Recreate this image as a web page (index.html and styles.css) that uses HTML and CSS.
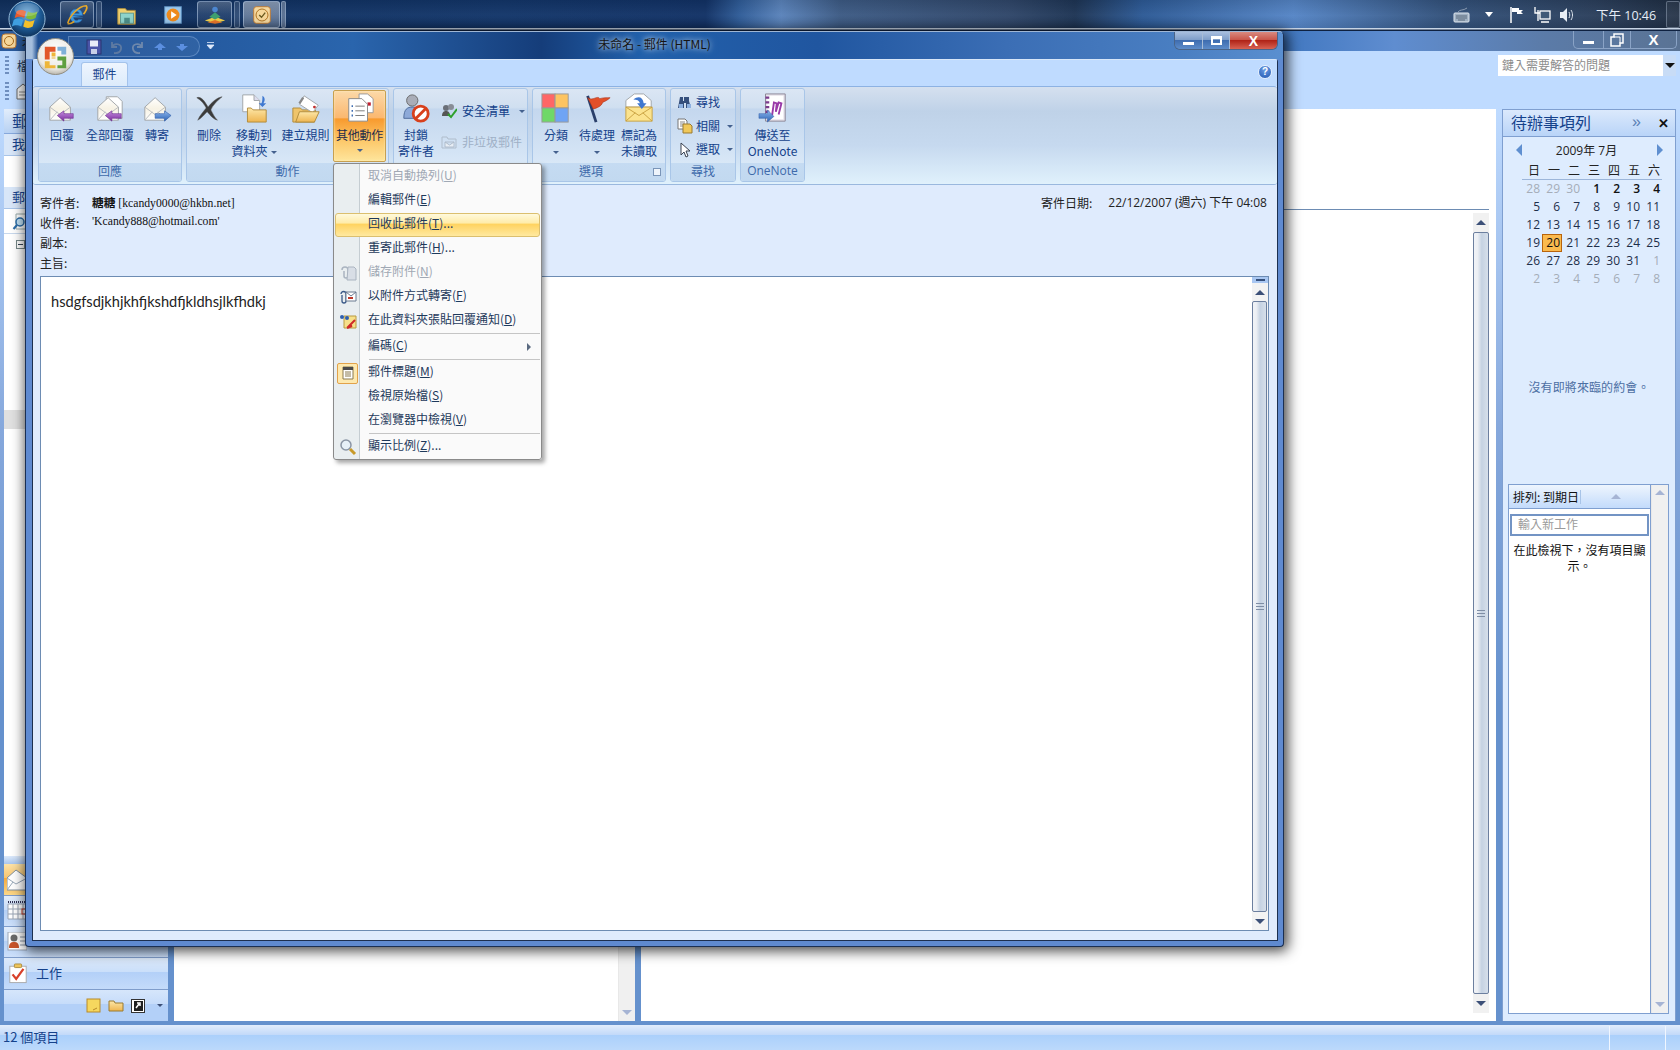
FILE: index.html
```html
<!DOCTYPE html>
<html lang="zh-Hant">
<head>
<meta charset="utf-8">
<title>未命名 - 郵件 (HTML)</title>
<link rel="stylesheet" href="styles.css">
</head>
<body>
<svg class="defs" aria-hidden="true">
  <defs>
    <linearGradient id="gEnv" x1="0" y1="0" x2="0" y2="1"><stop offset="0" stop-color="#fff"/><stop offset=".5" stop-color="#f7f2e4"/><stop offset="1" stop-color="#fff"/></linearGradient>
    <linearGradient id="gFold" x1="0" y1="0" x2="0" y2="1"><stop offset="0" stop-color="#fde7a8"/><stop offset="1" stop-color="#eeb550"/></linearGradient>
    <linearGradient id="gPurple" x1="0" y1="0" x2="0" y2="1"><stop offset="0" stop-color="#c58ce0"/><stop offset="1" stop-color="#7a2f9e"/></linearGradient>
    <linearGradient id="gBlue" x1="0" y1="0" x2="0" y2="1"><stop offset="0" stop-color="#8fb8ee"/><stop offset="1" stop-color="#2d63b5"/></linearGradient>
    <radialGradient id="gOrb" cx=".5" cy=".38" r=".65"><stop offset="0" stop-color="#6fb0e0"/><stop offset=".55" stop-color="#1f5e9a"/><stop offset="1" stop-color="#0c2c52"/></radialGradient>
    <radialGradient id="gOff" cx=".5" cy=".35" r=".7"><stop offset="0" stop-color="#fff"/><stop offset=".7" stop-color="#eceae4"/><stop offset="1" stop-color="#a9a69c"/></radialGradient>
    <symbol id="env" viewBox="0 0 32 32"><path d="M3 15 14 5l11 10v14H3z" fill="url(#gEnv)" stroke="#a0a4a8"/><path d="M3 15l11 8 11-8M3 29l8-9M25 29l-8-9" fill="none" stroke="#b9bcbf"/></symbol>
  </defs>
</svg>

<div class="desktop">
  <header class="taskbar">
    <div class="tb-start"></div>
    <div class="tb-item tb-box">
      <svg width="24" height="24" viewBox="0 0 26 26"><path d="M6 13.500h13c0-4-2.500-7-6.500-7S5.500 9.500 5.500 14s3 7.500 7 7.500c3 0 5-1.500 6-3.500h-4c-.5.800-1.200 1-2 1-2 0-3.200-1.500-3.300-3.500h10.300M9 11.500c.2-1.500 1.500-2.500 3.300-2.500s3 1 3.200 2.500z" fill="#3f9ae0" stroke="#2a6db8" stroke-width=".5" fill-rule="evenodd"/><path d="M3 22C5 14 15 3 23 3c2 2-1 7-3 9M3 22c1 1 4 0 7-2" fill="none" stroke="#e9a92a" stroke-width="1.800"/></svg>
    </div>
    <div class="tb-stub"></div>
    <div class="tb-item tb-plain tb-explorer">
      <svg width="24" height="24" viewBox="0 0 26 26"><path d="M3 6h8l2 2h9v15H3z" fill="#f0d070" stroke="#a88a3c"/><rect x="6" y="11" width="14" height="11" fill="#8fd4cc" stroke="#5e9a94"/><rect x="10" y="16" width="6" height="6" fill="#4d8f8a"/></svg>
    </div>
    <div class="tb-item tb-plain tb-media">
      <svg width="24" height="24" viewBox="0 0 26 26"><rect x="4" y="4" width="18" height="18" fill="#9cc8ec" stroke="#5c90c0"/><circle cx="13" cy="13" r="7" fill="#ee8a1c"/><path d="M11 9l6 4-6 4z" fill="#fff"/></svg>
    </div>
    <div class="tb-item tb-box tb-second">
      <svg width="24" height="24" viewBox="0 0 26 26"><path d="M2 19l11-4 11 4-11 3z" fill="#f1d04a"/><path d="M7 15l6-5 6 5-6 3z" fill="#3fa070"/><circle cx="13" cy="7" r="3" fill="#4c86d0"/><path d="M5 21l8-2.500 8 2.500-8 1.500z" fill="#e8762a"/></svg>
    </div>
    <div class="tb-stub"></div>
    <div class="tb-item tb-box tb-active">
      <svg width="24" height="24" viewBox="0 0 26 26"><rect x="4" y="4" width="18" height="18" rx="3" fill="#f4d8a0" stroke="#c07a30"/><circle cx="13" cy="13" r="6.500" fill="#f6d79a" stroke="#a86a1a"/><path d="M10 13l2.500 2.500 4-5" fill="none" stroke="#6a5a20" stroke-width="1.500"/></svg>
    </div>
    <div class="tb-stub tb-stub-active"></div>
    <div class="tray">
      <svg width="18" height="18" viewBox="0 0 18 18"><rect x="1" y="7" width="15" height="9" rx="1" fill="#9fb0c2" stroke="#dfe6ee"/><path d="M3 10h11M3 12h11M5 14h7" stroke="#5a6a7c"/><path d="M5 6c2-3 5-1 9-4" fill="none" stroke="#8a9bb0"/></svg>
      <span class="tray-arrow"></span>
      <svg class="tray-flag" width="18" height="18" viewBox="0 0 18 18"><path d="M3 1v16" stroke="#fff" stroke-width="1.500"/><path d="M4 2h7v2h4l-2 2 2 2H9V6H4z" fill="#fff"/></svg>
      <svg class="tray-net" width="18" height="18" viewBox="0 0 18 18"><path d="M1 1v6h5M4 4v11" stroke="#fff" stroke-width="1.300" fill="none"/><rect x="6" y="5" width="10" height="8" fill="#415a78" stroke="#fff" stroke-width="1.300"/><path d="M7 16h8" stroke="#fff" stroke-width="1.500"/></svg>
      <svg class="tray-vol" width="18" height="18" viewBox="0 0 18 18"><path d="M2 6h3l4-4v14l-4-4H2z" fill="#e8eef5"/><path d="M11 6c1 2 1 4 0 6M13 4c2 3 2 7 0 10" fill="none" stroke="#dfe6ee"/></svg>
      <span class="clock">下午 10:46</span>
      <span class="show-desktop"></span>
    </div>
  </header>

  <section class="main-win">
    <div class="main-title">
      <svg class="main-appicon" width="16" height="16" viewBox="0 0 16 16"><rect x="1" y="1" width="14" height="14" rx="3" fill="#f4d8a0" stroke="#c07a30"/><circle cx="8" cy="8" r="4.500" fill="#f6d79a" stroke="#a86a1a"/></svg>
      <span class="main-title-text">未</span>
      <div class="main-controls">
        <span class="mc mc-min"><i></i></span>
        <span class="mc mc-max"><svg width="14" height="14" viewBox="0 0 14 14"><path d="M4 1h9v9h-3v3H1V4h3z" fill="none" stroke="#fff" stroke-width="1.500"/><path d="M4 4h6v6" fill="none" stroke="#fff"/></svg></span>
        <span class="mc mc-close">X</span>
      </div>
    </div>
    <div class="main-menu">
      <div class="menu-bars">
        <div class="menu-line"><span class="dots"></span><span class="menu-word">檔</span></div>
        <div class="menu-line"><span class="dots"></span>
          <svg width="16" height="17" viewBox="0 0 16 17"><path d="M2 6l6-5 6 5v10H2z" fill="#f2f2f2" stroke="#666"/><path d="M4 9h8M4 12h8" stroke="#888"/></svg>
        </div>
      </div>
      <div class="askbox"><span>鍵入需要解答的問題</span><b><i class="tri-d dark"></i></b></div>
    </div>
    <div class="panes">
      <nav class="nav">
        <div class="nav-top">
          <div class="nav-head">郵</div>
          <div class="nav-row">我</div>
          <div class="nav-blank"></div>
          <div class="nav-row">郵</div>
          <div class="nav-search">
            <svg width="18" height="18" viewBox="0 0 18 18"><path d="M4 1h13v15H4z" fill="#fff" stroke="#9aa"/><circle cx="8" cy="9" r="4" fill="#bfe0f5" stroke="#2b6ca8" stroke-width="1.500"/><path d="M5 12l-3.500 4" stroke="#2b6ca8" stroke-width="2"/></svg>
          </div>
          <div class="nav-tree"><span class="tree-box"><i></i></span></div>
          <div class="nav-sel"></div>
        </div>
        <div class="nav-bottom">
          <div class="nav-grip"></div>
          <div class="nb-big nb-on"><svg width="20" height="22" viewBox="0 0 20 22"><path d="M0 9 9 1l11 8v12H0z" fill="#fff" stroke="#7f8f9f"/><path d="M0 9l9 6 11-6M0 21l6-8" fill="none" stroke="#99a8b8"/></svg></div>
          <div class="nb-big"><svg width="20" height="20" viewBox="0 0 20 20"><path d="M1 1h19" stroke="#335" stroke-dasharray="1 1" stroke-width="2"/><path d="M1 3h19v15H1z" fill="#fff" stroke="#9aa5b5"/><path d="M1 8h19M1 13h19M6 3v15M11 3v15M16 3v15" stroke="#9aa5b5"/><rect x="15" y="8" width="5" height="5" fill="none" stroke="#c43c28"/></svg></div>
          <div class="nb-big"><svg width="20" height="20" viewBox="0 0 20 20"><rect x="1" y="0" width="19" height="18" fill="#fff" stroke="#9aa5b5"/><circle cx="7" cy="6" r="3.500" fill="#6a6a6a"/><path d="M2 16c0-5 2-6 5-6s5 1 5 6z" fill="#c8552a"/><path d="M13 5h7M13 9h7M13 13h7" stroke="#8a96a6"/></svg></div>
          <div class="nb-task">
            <svg width="20" height="21" viewBox="0 0 22 22"><rect x="2" y="3" width="18" height="18" fill="#fff" stroke="#a8a8a8"/><rect x="7" y="0.500" width="8" height="4" rx="1" fill="#eec45a" stroke="#a88a3c"/><path d="M5 12l4 5L17 6" fill="none" stroke="#d8402a" stroke-width="2.500"/></svg>
            <span>工作</span>
          </div>
          <div class="nb-icons">
            <svg width="15" height="15" viewBox="0 0 15 15"><rect x="1" y="1" width="13" height="13" fill="#f6d75e" stroke="#b88a2a"/><path d="M7 12l4-2" stroke="#b88a2a"/></svg>
            <svg width="16" height="13" viewBox="0 0 16 13"><path d="M1 2h5l1 2h8v8H1z" fill="url(#gFold)" stroke="#9a7a30"/></svg>
            <svg width="14" height="14" viewBox="0 0 14 14"><rect x=".5" y=".5" width="13" height="13" fill="#fff" stroke="#333"/><rect x="3" y="2" width="9" height="10" fill="#202020"/><path d="M5 9l3-4M6 4h3v3" stroke="#fff" fill="none" stroke-width="1.500"/></svg>
            <i class="tri-d small"></i>
          </div>
        </div>
      </nav>
      <div class="list">
        <div class="list-body"></div>
        <div class="sb-plain"><i class="tri-u pale"></i><i class="tri-d pale"></i></div>
      </div>
      <div class="reading">
        <div class="reading-head"></div>
        <div class="reading-body">
          <div class="reading-fill"></div>
          <div class="sb">
            <span class="sb-btn"><i class="tri-u"></i></span>
            <div class="sb-thumb"><span class="grip"></span></div>
            <span class="sb-btn"><i class="tri-d"></i></span>
          </div>
        </div>
      </div>
      <aside class="todo">
        <div class="todo-head"><span class="todo-title">待辦事項列</span><span class="todo-more">»</span><span class="todo-x">✕</span></div>
        <div class="cal">
          <div class="cal-month"><i class="arr-l"></i><span>2009年 7月</span><i class="arr-r"></i></div>
          <div class="cal-week"><span>日</span><span>一</span><span>二</span><span>三</span><span>四</span><span>五</span><span>六</span></div>
          <div class="cal-grid">
            <span class="off">28</span><span class="off">29</span><span class="off">30</span><span class="on">1</span><span class="on">2</span><span class="on">3</span><span class="on">4</span>
            <span>5</span><span>6</span><span>7</span><span>8</span><span>9</span><span>10</span><span>11</span>
            <span>12</span><span>13</span><span>14</span><span>15</span><span>16</span><span>17</span><span>18</span>
            <span>19</span><span class="today">20</span><span>21</span><span>22</span><span>23</span><span>24</span><span>25</span>
            <span>26</span><span>27</span><span>28</span><span>29</span><span>30</span><span>31</span><span class="off">1</span>
            <span class="off">2</span><span class="off">3</span><span class="off">4</span><span class="off">5</span><span class="off">6</span><span class="off">7</span><span class="off">8</span>
          </div>
        </div>
        <p class="no-appt">沒有即將來臨的約會。</p>
        <div class="tasks">
          <div class="tasks-main">
            <div class="tasks-head"><span class="tasks-sort">排列: 到期日</span><span class="tasks-arrow"><i class="tri-u pale"></i></span></div>
            <div class="task-input">輸入新工作</div>
            <p class="task-empty">在此檢視下，沒有項目顯示。</p>
          </div>
          <div class="sb-plain"><i class="tri-u pale"></i><i class="tri-d pale"></i></div>
        </div>
      </aside>
    </div>
    <footer class="status"><span>12 個項目</span><i class="st-div st-a"></i><i class="st-div st-b"></i></footer>
  </section>

  <section class="mail-win">
    <div class="mail-title">
      <div class="qat">
        <svg width="16" height="16" viewBox="0 0 16 16"><rect x="1" y="1" width="14" height="14" fill="#4a55a8" stroke="#2b3470"/><rect x="4" y="1.500" width="8" height="6" fill="#e8ecf8"/><rect x="5" y="10" width="6" height="5" fill="#c8d0e8"/></svg>
        <svg width="16" height="16" viewBox="0 0 16 16"><path d="M4 3v5h5M4 8c3-5 10-3 9 2s-5 4-7 4" fill="none" stroke="#7f8ea5" stroke-width="1.800" opacity=".6"/></svg>
        <svg width="16" height="16" viewBox="0 0 16 16"><path d="M12 3v5H7M12 8C9 3 2 5 3 10s5 4 7 4" fill="none" stroke="#8a9ab0" stroke-width="1.800" opacity=".7"/></svg>
        <svg width="16" height="16" viewBox="0 0 16 16"><path d="M8 4l6 5H10v2H6V9H2z" fill="#5b8fe0"/></svg>
        <svg width="16" height="16" viewBox="0 0 16 16"><path d="M8 12l6-5H10V5H6v2H2z" fill="#5b8fe0"/></svg>
      </div>
      <svg class="qat-more" width="9" height="9" viewBox="0 0 9 9"><path d="M1 1.500h7M1 4l3.500 4L8 4z" fill="#dfeafa" stroke="#dfeafa" stroke-width=".8"/></svg>
      <h1 class="mail-title-text">未命名 - 郵件 (HTML)</h1>
      <div class="mail-controls">
        <span class="wc wc-min"><i></i></span>
        <span class="wc wc-max"><i></i></span>
        <span class="wc wc-close">X</span>
      </div>
    </div>
    <div class="mail-frame">
      <div class="tabs">
        <span class="tab">郵件</span>
        <span class="help">?</span>
      </div>
      <div class="ribbon">
        <div class="grp g-reply">
          <div class="grp-body">
            <button class="rb w-44"><svg class="ic" viewBox="0 0 32 32"><use href="#env"/><path d="M11 24l7-5v3h10v5H18v3z" fill="url(#gPurple)" stroke="#6a2a8c" stroke-width=".6"/></svg><span>回覆</span></button>
            <button class="rb w-52"><svg class="ic" viewBox="0 0 32 32"><path d="M12 4h12l5 5v18H12z" fill="#fff" stroke="#a0a4a8"/><use href="#env"/><path d="M11 24l7-5v3h10v5H18v3z" fill="url(#gPurple)" stroke="#6a2a8c" stroke-width=".6"/></svg><span>全部回覆</span></button>
            <button class="rb w-42"><svg class="ic" viewBox="0 0 32 32"><use href="#env"/><path d="M31 24l-7-5v3H14v5h10v3z" fill="url(#gBlue)" stroke="#2a5aa8" stroke-width=".6"/></svg><span>轉寄</span></button>
          </div>
          <div class="grp-label">回應</div>
        </div>
        <div class="grp g-actions">
          <div class="grp-body">
            <button class="rb w-38"><svg class="ic" viewBox="0 0 32 32"><path d="M3 5c5-2 9 5 12 10 4-5 9-10 15-11-5 4-10 9-12 14 2 4 4 8 7 11-5-1-8-6-11-9-3 3-6 7-10 9 2-5 6-9 9-13C11 12 8 8 3 5z" fill="#3b3b3b" stroke="#555" stroke-width=".5"/></svg><span>刪除</span></button>
            <button class="rb w-52"><svg class="ic" viewBox="0 0 32 32"><path d="M4 2h12l6 6v12H4z" fill="#fff" stroke="#a0a4a8"/><path d="M16 2v6h6" fill="#dde" stroke="#a0a4a8"/><path d="M9 16h4l2 2h14v13H9z" fill="url(#gFold)" stroke="#b08a3a"/><path d="M25 3c3 2 3 5 1 8h3l-4 4-4-4h3c1-2 1-5 1-8z" fill="#3f78d0"/></svg><span>移動到<br>資料夾<i class="caret"></i></span></button>
            <button class="rb w-51"><svg class="ic" viewBox="0 0 32 32"><path d="M2 16h8l2 2h14l-1 13H2z" fill="#efc46a" stroke="#b08a3a"/><path d="M14 3 29 13 23 21 9 12z" fill="#fff" stroke="#a0a4a8"/><path d="M13 5 9 11" stroke="#888" stroke-width="2.500"/><circle cx="25" cy="15" r="1.500" fill="#c03030"/><path d="M5 31 9 20h21l-5 11z" fill="url(#gFold)" stroke="#b08a3a"/></svg><span>建立規則</span></button>
            <button class="rb rb-hot"><svg class="ic" viewBox="0 0 32 32"><path d="M15 1h9l6 5v15H15z" fill="#fff" stroke="#999"/><rect x="24" y="10" width="3.500" height="3.500" fill="#c02030"/><path d="M4 6h14l6 6v18H4z" fill="#fff" stroke="#888"/><path d="M7 14h1.500M7 19h1.500M7 24h1.500" stroke="#3a6ab0" stroke-width="2"/><path d="M11 14h10M11 19h10M11 24h10" stroke="#777"/></svg><span>其他動作</span><i class="caret alone"></i></button>
          </div>
          <div class="grp-label">動作</div>
        </div>
        <div class="grp g-junk">
          <div class="grp-body">
            <button class="rb w-44"><svg class="ic" viewBox="0 0 32 32"><circle cx="12" cy="8" r="6" fill="#a9adb8" stroke="#666"/><path d="M3 27c0-10 4-12 9-12 6 0 9 3 9 12z" fill="#8da9d8" stroke="#4d6a9a"/><circle cx="21" cy="22" r="8" fill="#fff" stroke="#d8401c" stroke-width="3"/><path d="M15.500 27.500l11-11" stroke="#d8401c" stroke-width="3"/></svg><span>封鎖<br>寄件者</span></button>
            <div class="small-col">
              <div class="sm"><svg width="16" height="16" viewBox="0 0 16 16"><circle cx="5" cy="5" r="3" fill="#6a6f78"/><circle cx="10" cy="4" r="3" fill="#888d96"/><path d="M1 13c0-4 2-5 4-5s4 1 4 5z" fill="#555"/><path d="M7 11l3 3 6-8" fill="none" stroke="#2ea02c" stroke-width="2"/></svg><span>安全清單</span><i class="caret"></i></div>
              <div class="sm sm-off"><svg width="16" height="16" viewBox="0 0 16 16"><path d="M1 3h5l1 2h8v9H1z" fill="none" stroke="#b0bdcc"/><path d="M4 8h9v5H4zM4 8l4.500 3L13 8" fill="#e8eef5" stroke="#b0bdcc"/></svg><span>非垃圾郵件</span></div>
            </div>
          </div>
          <div class="grp-label"></div>
        </div>
        <div class="grp g-opts">
          <div class="grp-body">
            <button class="rb w-38 ml-4"><svg class="ic" viewBox="0 0 32 32"><rect x="1" y="1" width="14" height="15" fill="#f66" stroke="#999"/><rect x="15" y="1" width="14" height="15" fill="#fdc462" stroke="#999"/><rect x="1" y="16" width="14" height="15" fill="#6fd868" stroke="#999"/><rect x="15" y="16" width="14" height="15" fill="#6fa4f4" stroke="#999"/></svg><span>分類<br><i class="caret alone"></i></span></button>
            <button class="rb w-44"><svg class="ic" viewBox="0 0 32 32"><path d="M6 3l9 28" stroke="#2a3f6a" stroke-width="3"/><path d="M6 5c6 4 10-3 13 1 3-1 7-1 11-1-3 3-6 4-8 5-1 4-6 6-10 7z" fill="#e2502a" stroke="#a83018" stroke-width=".6"/></svg><span>待處理<br><i class="caret alone"></i></span></button>
            <button class="rb w-40"><svg class="ic" viewBox="0 0 32 32"><path d="M2 15V8l9-7h10l8 7v7z" fill="#fff" stroke="#a0a4a8"/><path d="M2 15h28v15H2z" fill="#fbe38e" stroke="#c8a040"/><path d="M2 15l14 9 14-9M2 30l10-9M30 30l-10-9" fill="none" stroke="#c8a040"/><path d="M10 7c5-4 10-3 11 4h3l-5 6-5-6h3c-1-3-3-4-7-4z" fill="#3f78d0"/></svg><span>標記為<br>未讀取</span></button>
          </div>
          <div class="grp-label label-launch">選項<i class="launcher"></i></div>
        </div>
        <div class="grp g-find">
          <div class="grp-body col">
            <div class="sm"><svg width="16" height="16" viewBox="0 0 16 16"><path d="M3 2h3v4h1V2h2h3v4l2 7H9V8H7v5H1z" fill="#36507c"/><rect x="2" y="9" width="4" height="4" fill="#8cb0e0"/><rect x="10" y="9" width="4" height="4" fill="#8cb0e0"/></svg><span>尋找</span></div>
            <div class="sm"><svg width="16" height="16" viewBox="0 0 16 16"><path d="M1 1h7l2 2v8H1z" fill="#fff" stroke="#777"/><path d="M3 4h5M3 6h5M3 8h5" stroke="#888"/><path d="M6 6h7l2 2v7H6z" fill="#f0c85a" stroke="#9a7a30"/></svg><span>相關</span><i class="caret"></i></div>
            <div class="sm"><svg width="16" height="16" viewBox="0 0 16 16"><path d="M4 1v12l3-3 2 5 2-1-2-5h4z" fill="#fff" stroke="#3a4250"/></svg><span>選取</span><i class="caret"></i></div>
          </div>
          <div class="grp-label">尋找</div>
        </div>
        <div class="grp g-one">
          <div class="grp-body">
            <button class="rb w-fill"><svg class="ic" viewBox="0 0 32 32"><path d="M8 1h21v29H8z" fill="#e8e4ec" stroke="#8a8494"/><path d="M10 3h17v25H10z" fill="#fff"/><path d="M8 5h4M8 10h4M8 15h4M8 20h4" stroke="#7a3a8c" stroke-width="2.500"/><path d="M15 24l2-14 3 1-1 9 3-10 3 1-3 12" fill="none" stroke="#9a3aa8" stroke-width="2"/><path d="M1 22h9v-4l7 7-7 6v-4H1z" fill="url(#gBlue)" stroke="#2a5aa8" stroke-width=".5"/></svg><span>傳送至<br>OneNote</span></button>
          </div>
          <div class="grp-label">OneNote</div>
        </div>
      </div>
      <div class="msg-head">
        <div class="hd-row"><span class="hd-label">寄件者:</span><span class="hd-val"><b class="hd-name">糖糖</b> [kcandy0000@hkbn.net]</span><span class="hd-date-label">寄件日期:</span><span class="hd-date">22/12/2007 (週六) 下午 04:08</span></div>
        <div class="hd-row"><span class="hd-label">收件者:</span><span class="hd-val">'Kcandy888@hotmail.com'</span></div>
        <div class="hd-row"><span class="hd-label">副本:</span></div>
        <div class="hd-row"><span class="hd-label">主旨:</span></div>
      </div>
      <div class="msg-body">
        <div class="msg-text">hsdgfsdjkhjkhfjkshdfjkldhsjlkfhdkj</div>
        <div class="sb sb-split">
          <span class="sb-splitter"><i></i></span>
          <span class="sb-btn"><i class="tri-u"></i></span>
          <div class="sb-thumb"><span class="grip"></span></div>
          <span class="sb-btn"><i class="tri-d"></i></span>
        </div>
      </div>
    </div>
  </section>

  <div class="dropdown">
    <div class="mi off"><span class="mi-ic"></span><span>取消自動換列(<u>U</u>)</span></div>
    <div class="mi"><span class="mi-ic"></span><span>編輯郵件(<u>E</u>)</span></div>
    <div class="mi hot"><span class="mi-ic"></span><span>回收此郵件(<u>T</u>)...</span></div>
    <div class="mi"><span class="mi-ic"></span><span>重寄此郵件(<u>H</u>)...</span></div>
    <div class="mi off"><span class="mi-ic"><svg width="18" height="16" viewBox="0 0 18 16"><path d="M3 5a3 3 0 0 1 6 0v6a2 2 0 0 1-4 0V6" fill="none" stroke="#aab4c0" stroke-width="1.500"/><path d="M9 2h6l2 2v11H8z" fill="#d8dee6" stroke="#aab4c0"/></svg></span><span>儲存附件(<u>N</u>)</span></div>
    <div class="mi"><span class="mi-ic"><svg width="18" height="16" viewBox="0 0 18 16"><path d="M2 5a2.500 2.500 0 0 1 5 0v7a2 2 0 0 1-4 0V6" fill="none" stroke="#3b5a88" stroke-width="1.300"/><path d="M7 3h10v9H7z" fill="#fff" stroke="#6a7a90"/><path d="M7 3l5 4 5-4" fill="none" stroke="#6a7a90"/><path d="M9 9h5" stroke="#c0392b" stroke-width="2"/></svg></span><span>以附件方式轉寄(<u>F</u>)</span></div>
    <div class="mi"><span class="mi-ic"><svg width="18" height="16" viewBox="0 0 18 16"><path d="M5 3h12v12H5z" fill="#f6e08a" stroke="#b89a40"/><circle cx="3" cy="4" r="2" fill="#2d5fb0"/><circle cx="8" cy="5" r="2" fill="#2d5fb0"/><path d="M16 7l-6 6h3l-5 2" fill="none" stroke="#d02a2a" stroke-width="2"/></svg></span><span>在此資料夾張貼回覆通知(<u>D</u>)</span></div>
    <div class="mi-sep"></div>
    <div class="mi"><span class="mi-ic"></span><span>編碼(<u>C</u>)</span><i class="tri-r"></i></div>
    <div class="mi-sep"></div>
    <div class="mi"><span class="mi-ic mi-checked"><svg width="14" height="14" viewBox="0 0 14 14"><path d="M2 1h10v12H2z" fill="#fff" stroke="#8a7a50"/><path d="M2 1h10v3H2z" fill="#4a4a4a"/><path d="M4 6h6M4 8h6M4 10h6" stroke="#8a7a50"/></svg></span><span>郵件標題(<u>M</u>)</span></div>
    <div class="mi"><span class="mi-ic"></span><span>檢視原始檔(<u>S</u>)</span></div>
    <div class="mi"><span class="mi-ic"></span><span>在瀏覽器中檢視(<u>V</u>)</span></div>
    <div class="mi-sep"></div>
    <div class="mi"><span class="mi-ic"><svg width="18" height="18" viewBox="0 0 18 18"><circle cx="7" cy="7" r="5" fill="#e6f0f8" stroke="#8a95a5" stroke-width="1.500"/><path d="M11 11l5 5" stroke="#c89a2a" stroke-width="3"/></svg></span><span>顯示比例(<u>Z</u>)...</span></div>
  </div>

  <div class="office-btn">
    <svg width="37" height="37" viewBox="0 0 38 38"><circle cx="19" cy="19" r="18.500" fill="url(#gOff)" stroke="#8f8c82"/><path d="M8 9h11v5h-6v8H8z" fill="#e2572a"/><path d="M21 9h9v8h-5v-4h-4z" fill="#7fb0d8"/><path d="M8 24h5v4h6v3H8z" fill="#eeb63a"/><path d="M21 19h9v12h-9v-3h5v-5h-5z" fill="#5fa040"/><path d="M15 15h4v4h-4zM15 21h4v-1h-4z" fill="#eeb63a"/></svg>
  </div>
  <div class="orb">
    <svg width="38" height="38" viewBox="0 0 40 40"><circle cx="20" cy="20" r="19" fill="url(#gOrb)" stroke="#9cc0dd" stroke-width="1"/><path d="M9 12c3-2 6-2 10 0l-2 7c-3-2-6-2-10 0z" fill="#e85a2a"/><path d="M21 12c3 2 7 2 10 0l-2 7c-3 2-7 2-10 0z" fill="#7cba3a"/><path d="M6 21c3-2 7-2 10 0l-2 7c-3-2-7-2-10 0z" fill="#3f9fe0"/><path d="M18 21c3 2 7 2 10 0l-2 7c-3 2-7 2-10 0z" fill="#f4c02a"/><ellipse cx="20" cy="10" rx="13" ry="7" fill="#fff" opacity=".2"/></svg>
  </div>
</div>
</body>
</html>
```
FILE: styles.css
```css
* { box-sizing: border-box; }
html, body { margin: 0; padding: 0; }
body {
  width: 1680px;
  height: 1050px;
  overflow: hidden;
  font-family: "Noto Sans CJK TC", "Noto Sans", sans-serif;
  font-size: 12px;
  color: #1e395b;
}
.defs { display: block; width: 0; height: 0; }
i { display: inline-block; font-style: normal; }
button { font: inherit; border: 0; background: none; padding: 0; color: inherit; }
p, h1 { margin: 0; font-weight: 400; }

.desktop {
  position: relative;
  width: 1680px;
  height: 1050px;
  display: flex;
  flex-direction: column;
  overflow: hidden;
}

/* taskbar */
.taskbar {
  height: 31px;
  flex: none;
  display: flex;
  align-items: flex-start;
  padding-top: 1px;
  background:
    linear-gradient(180deg, rgba(0,0,0,.1) 0, rgba(255,255,255,.03) 50%, rgba(0,0,0,.08) 90%, transparent 90%),
    linear-gradient(180deg, transparent 28px, #b9c9dc 28px, #d5e0ee 29px, #0e2140 30px),
    linear-gradient(90deg, #10305e 0, #13366a 30%, #123266 42%, #2f5c98 44%, #5a83bb 46.500%, #3d5b85 50%, #30476a 60%, #1e3555 64%, #2d5a96 68%, #5585c6 77%, #33527c 86%, #2b3f5c 95%, #1e2d42 100%);
}
.tb-start { width: 60px; height: 1px; }
.tb-item { height: 27px; display: flex; align-items: center; justify-content: center; }
.tb-box {
  width: 34px;
  border: 1px solid rgba(190,210,235,.55);
  border-radius: 3px;
  background: linear-gradient(180deg, rgba(255,255,255,.24), rgba(255,255,255,.08) 50%, rgba(255,255,255,.05));
}
.tb-second { margin-left: 0; width: 35px; }
.tb-active { width: 37px; margin-left: 3px; background: linear-gradient(180deg, rgba(255,255,255,.45), rgba(255,255,255,.25)); }
.tb-stub {
  width: 6px;
  height: 27px;
  margin-left: 2px;
  border: 1px solid rgba(190,210,235,.4);
  border-radius: 2px;
  background: rgba(255,255,255,.12);
}
.tb-stub-active { width: 5px; margin-left: 1px; background: rgba(255,255,255,.3); }
.tb-plain { width: 30px; }
.tb-explorer { margin-left: 10px; }
.tb-media { margin-left: 16px; margin-right: 9px; }
.tray { margin-left: auto; height: 27px; display: flex; align-items: center; color: #e6edf6; }
.tray-arrow { width: 0; height: 0; margin: 0 0 0 14px; border: 4px solid transparent; border-top: 5px solid #fff; border-bottom: 0; }
.tray-flag { margin-left: 15px; }
.tray-net { margin-left: 8px; }
.tray-vol { margin-left: 6px; }
.clock { margin-left: 20px; width: 70px; font-size: 12.500px; font-family: "Open Sans", "Noto Sans CJK TC", sans-serif; }
.show-desktop { width: 14px; height: 27px; border: 1px solid rgba(200,215,235,.35); border-radius: 2px; background: rgba(255,255,255,.05); }

/* main window behind */
.main-win {
  flex: 1;
  display: flex;
  flex-direction: column;
  min-height: 0;
  background: #bfdbff;
}
.main-title {
  height: 20px;
  flex: none;
  display: flex;
  align-items: flex-start;
  padding-left: 1px;
  background: linear-gradient(90deg, #2a5a9c 0, #3f76bf 76%, #5f8dd0 83%, #5b7ba8 92%, #5a7394 100%);
}
.main-appicon { margin-top: 2px; }
.main-title-text { margin-left: 5px; margin-top: 1px; color: #1b1b1b; }
.main-controls {
  margin-left: auto;
  margin-right: 3px;
  width: 104px;
  height: 18px;
  display: flex;
  border: 1px solid #8aa3c6;
  border-top: 0;
  border-radius: 0 0 5px 5px;
}
.mc { display: flex; align-items: center; justify-content: center; border-right: 1px solid #8aa3c6; color: #fff; }
.mc-min { width: 30px; }
.mc-min i { width: 11px; height: 3px; margin-top: 6px; background: #fff; }
.mc-max { width: 27px; }
.mc-close { flex: 1; border-right: 0; font: 700 15px "Liberation Sans", sans-serif; }
.main-menu {
  height: 57px;
  flex: none;
  display: flex;
  justify-content: space-between;
  align-items: flex-start;
  padding-top: 4px;
  padding-right: 4px;
  background: #bfdbff;
}
.menu-bars { margin-top: -2px; }
.menu-line { display: flex; align-items: center; height: 24px; margin-bottom: 2px; padding-left: 5px; gap: 6px; }
.dots { width: 4px; height: 18px; background: repeating-linear-gradient(180deg, #6f8fbf 0 2px, transparent 2px 4px); }
.menu-word { color: #1e395b; margin-left: 2px; }
.askbox { width: 178px; height: 21px; display: flex; align-items: center; background: #fff; padding-left: 4px; color: #8d8d8d; }
.askbox span { flex: 1; padding-bottom: 2px; }
.askbox b { width: 13px; height: 100%; background: #c8dcf6; display: flex; align-items: center; justify-content: center; }

.panes {
  flex: 1;
  min-height: 0;
  display: flex;
  gap: 6px;
  padding: 1px 4px 4px;
  background: linear-gradient(180deg, #bfdbff 0, #86a8dc 35%, #6591cd 65%);
}
.nav { width: 164px; display: flex; flex-direction: column; background: #fff; }
.nav-top { flex: 1; min-height: 0; display: flex; flex-direction: column; background: #fff; }
.nav-head { height: 25px; padding-left: 8px; font-size: 16px; line-height: 23px; color: #15428b; background: linear-gradient(#e2edfb, #b7d1f3); border-bottom: 1px solid #86a8dc; }
.nav-row { height: 22px; padding-left: 8px; line-height: 20px; font-size: 13px; color: #15428b; background: #d8e6f8; border-bottom: 1px solid #a8c4e8; white-space: nowrap; }
.nav-blank { height: 31px; background: #fff; }
.nav-search { height: 25px; padding: 4px 0 0 8px; border-bottom: 1px solid #c8d8ec; }
.nav-tree { height: 24px; padding: 6px 0 0 12px; }
.tree-box { display: block; width: 9px; height: 9px; border: 1px solid #788; position: relative; }
.tree-box i { display: block; width: 5px; height: 1px; margin: 3px 1px; background: #345; }
.nav-sel { height: 19px; margin-top: 152px; background: #e0e0e0; }
.nav-bottom { flex: none; display: flex; flex-direction: column; }
.nav-grip { height: 8px; background: linear-gradient(#dce9fa, #a9c6ee); }
.nb-big { height: 31px; padding: 5px 0 0 3px; background: linear-gradient(#e2edfb 0, #c8dcf7 45%, #b3cff5 46%, #cde0fa); border-bottom: 1px solid #7f9dcb; }
.nb-on { height: 32px; background: linear-gradient(#fde3a8 0, #f8c46e 45%, #f5a93f 46%, #fbd88a); }
.nb-task { height: 32px; padding-left: 4px; display: flex; align-items: center; gap: 8px; font-size: 13px; color: #15428b; background: linear-gradient(#dce9fa 0, #cadffa 45%, #b3d0f8 46%, #c4dbfa); border-bottom: 1px solid #7f9dcb; }
.nb-task span { padding-bottom: 2px; }
.nb-icons { height: 31px; display: flex; align-items: center; justify-content: flex-end; gap: 7px; padding-right: 5px; background: linear-gradient(#d6e6fb 0, #c6dcfa 45%, #b3d0f8 46%, #b3d0f8); }
.nb-icons .small { margin-left: 5px; }

.list { width: 461px; display: flex; background: #fff; }
.list-body { flex: 1; }
.sb-plain { width: 17px; display: flex; flex-direction: column; justify-content: space-between; align-items: center; padding: 5px 0 6px; background: #f0f0f0; border-left: 1px solid #e8e8e8; }
.reading { width: 855px; display: flex; flex-direction: column; background: #fff; }
.reading-head { height: 101px; margin-right: 7px; border-bottom: 1px solid #6d8cb3; flex: none; }
.reading-body { flex: 1; min-height: 0; display: flex; padding: 3px 7px 8px 0; }
.reading-fill { flex: 1; }

/* scrollbars */
.sb { width: 16px; display: flex; flex-direction: column; background: #f1f1f1; }
.sb-btn { height: 19px; flex: none; display: flex; align-items: center; justify-content: center; }
.sb-thumb {
  flex: 1;
  display: flex;
  align-items: center;
  justify-content: center;
  border: 1px solid #6c7f9f;
  border-radius: 2px;
  background: linear-gradient(90deg, #f0f3f7 0, #eceff4 25%, #c5d2e2 55%, #d6dfea 100%);
}
.grip { width: 8px; height: 7px; background: repeating-linear-gradient(180deg, #7f8ea5 0 1px, transparent 1px 3px); }
.tri-u, .tri-d, .tri-r { width: 0; height: 0; border-style: solid; border-color: transparent; }
.tri-u { border-width: 0 5px 5px; border-bottom-color: #3c5078; }
.tri-d { border-width: 5px 5px 0; border-top-color: #3c5078; }
.tri-r { border-width: 4px 0 4px 4px; border-left-color: #5a6a80; margin-left: auto; margin-right: 9px; }
.tri-u.pale { border-bottom-color: #a6b4d4; }
.tri-d.pale { border-top-color: #a6b4d4; }
.tri-d.dark { border-top-color: #111; }
.tri-d.small { border-width: 3px 3px 0; border-top-color: #3c5078; }

/* todo bar */
.todo { width: 174px; display: flex; flex-direction: column; background: #deecfe; border: 1px solid #7f9fd0; border-bottom: 0; }
.todo-head { height: 27px; flex: none; display: flex; align-items: center; padding: 0 6px 2px 8px; background: linear-gradient(#dbe9fc, #b9d4f8); border-bottom: 1px solid #7f9fd0; }
.todo-title { flex: 1; font-size: 16px; color: #15428b; white-space: nowrap; }
.todo-more { width: 26px; font: 400 16px "Liberation Sans", sans-serif; color: #5a7fb5; }
.todo-x { font-size: 13px; color: #111; font-weight: 700; }
.cal { padding: 0 0 0 19px; }
.cal-month { width: 140px; height: 25px; padding-top: 1px; display: flex; align-items: center; justify-content: space-between; color: #222; font-family: "Open Sans", "Noto Sans CJK TC", sans-serif; }
.cal-month span { margin-right: 6px; }
.arr-l, .arr-r { width: 0; height: 0; border-style: solid; border-color: transparent; }
.arr-l { border-width: 6px 6px 6px 0; border-right-color: #5f8fd0; margin-left: -6px; }
.arr-r { border-width: 6px 0 6px 6px; border-left-color: #5f8fd0; margin-right: -1px; }
.cal-week { width: 140px; height: 18px; padding-left: 2px; display: grid; grid-template-columns: repeat(7, 20px); text-align: center; line-height: 15px; color: #222; border-bottom: 1px solid #9cb6da; }
.cal-grid { width: 140px; display: grid; grid-template-columns: repeat(7, 20px); grid-auto-rows: 18px; font-size: 12px; line-height: 18px; text-align: right; color: #1e2f4a; font-family: "Open Sans", sans-serif; }
.cal-grid span { padding-right: 2px; }
.cal-grid .off { color: #a5adb8; }
.cal-grid .on { font-weight: 600; color: #111; }
.cal-grid .today { background: #fbba4e; border: 1px solid #b8640c; line-height: 16px; padding-right: 1px; color: #111; }
.no-appt { margin-top: 89px; line-height: 20px; text-align: center; color: #4d6fa3; letter-spacing: .1px; }
.tasks { flex: 1; min-height: 0; margin: 87px 6px 7px 5px; display: flex; border: 1px solid #7f9fd0; background: #fff; }
.tasks-main { flex: 1; min-width: 0; border-right: 1px solid #7f9fd0; }
.tasks-head { height: 24px; display: flex; align-items: center; background: linear-gradient(#eef5fe, #c3dbfb); border-bottom: 1px solid #7f9fd0; color: #111; }
.tasks-sort { width: 72px; padding-left: 4px; border-right: 1px solid #a8c4e8; line-height: 14px; white-space: nowrap; }
.tasks-arrow { flex: 1; display: flex; justify-content: center; }
.task-input { height: 22px; margin: 5px 1px 0; padding-left: 6px; border: 2px solid #7394c4; line-height: 15px; color: #9a9a9a; }
.task-empty { padding: 6px 3px 0; line-height: 16px; text-align: center; color: #111; }

/* status */
.status { height: 25px; flex: none; position: relative; padding-left: 3px; display: flex; align-items: center; font-size: 13px; color: #15428b; background: linear-gradient(#e2edfc 0, #c2d9f9 40%, #abd0fb 41%, #bcd9fb 100%); }
.status span { padding-bottom: 3px; }
.st-div { position: absolute; top: 1px; bottom: 0; width: 1px; background: #f0f6ff; }
.st-a { left: 1609px; }
.st-b { left: 1665px; }

/* mail window */
.mail-win {
  position: absolute;
  left: 25px;
  top: 31px;
  width: 1259px;
  height: 916px;
  display: flex;
  flex-direction: column;
  border: 1px solid #1a2f52;
  border-top-color: #9fb6d4;
  border-radius: 5px 5px 4px 4px;
  background: #5f8ad0;
  box-shadow: 2px 2px 13px 2px rgba(0,0,0,.72);
}
.mail-title {
  height: 27px;
  flex: none;
  position: relative;
  display: flex;
  align-items: flex-start;
  border-radius: 4px 4px 0 0;
  background: linear-gradient(90deg, #a5bedd 0, #a5bedd 6px, #1f4f92 12px, #2a65ad 26%, #153d7a 41%, #2260ab 49%, #2056a0 63%, #3b6eb5 78%, #4a7fc2 92%, #5a8fd0 100%);
}
.qat {
  position: absolute;
  left: 42px;
  top: 4px;
  width: 132px;
  height: 21px;
  padding-left: 17px;
  display: flex;
  align-items: center;
  gap: 6px;
  border: 1px solid rgba(170,200,240,.35);
  border-radius: 0 11px 11px 0;
  background: rgba(255,255,255,.05);
}
.qat-more { position: absolute; left: 180px; top: 9px; }
.mail-title-text {
  position: absolute;
  left: 0;
  right: 0;
  top: 3px;
  text-align: center;
  font-size: 12px;
  line-height: 18px;
  color: #141414;
  text-shadow: 0 0 5px rgba(225,235,245,.85), 0 0 9px rgba(225,235,245,.55);
  font-family: "Noto Sans CJK TC", "Open Sans", sans-serif;
}
.mail-controls {
  margin-left: auto;
  margin-right: 5px;
  width: 104px;
  height: 18px;
  display: flex;
  position: relative;
  border: 1px solid #4a6488;
  border-top: 0;
  border-radius: 0 0 6px 6px;
  overflow: hidden;
}
.wc { display: flex; align-items: center; justify-content: center; border-right: 1px solid #a8bcd6; background: linear-gradient(#a8bede, #7f9ec9 45%, #3f6db0 50%, #5d8cc9); }
.wc-min { width: 28px; }
.wc-min i { width: 11px; height: 3px; margin-top: 6px; background: #fff; }
.wc-max { width: 27px; }
.wc-max i { width: 11px; height: 9px; border: 2px solid #fff; border-top-width: 3px; }
.wc-close { flex: 1; border-right: 0; color: #fff; font: 700 14px "Liberation Sans", sans-serif; background: linear-gradient(#d98a80, #c9564a 45%, #b02418 50%, #d86252); }

.mail-frame {
  flex: 1;
  min-height: 0;
  margin: 0 5px 5px 6px;
  display: flex;
  flex-direction: column;
  border: 1px solid #1c2f4f;
  border-top-color: #d7e6f8;
  border-radius: 3px 3px 0 0;
  background: #dfebfd;
}
.tabs { height: 26px; flex: none; position: relative; padding: 2px 0 0 48px; background: #bfdbff; }
.tab { display: block; width: 47px; height: 24px; text-align: center; line-height: 21px; font-size: 12px; color: #15428b; background: linear-gradient(#eef5fe, #dcebfb); border: 1px solid #a4c3eb; border-bottom: 0; border-radius: 3px 3px 0 0; }
.help { position: absolute; right: 5px; top: 5px; width: 14px; height: 14px; border-radius: 50%; background: radial-gradient(circle at 50% 30%, #6e9fe4, #1f55b0); border: 1px solid #e4eefb; color: #fff; font: 700 10px/12px "Liberation Sans", sans-serif; text-align: center; }

.ribbon {
  height: 99px;
  flex: none;
  display: flex;
  gap: 4px;
  padding: 1px 0 0 5px;
  border-top: 1px solid #8db2e3;
  border-bottom: 1px solid #9ab8de;
  border-radius: 3px;
  background: linear-gradient(#d5e0ef 0, #bfd2e8 25%, #c6d9ef 60%, #e0f1fc 100%);
}
.grp {
  height: 94px;
  display: flex;
  flex-direction: column;
  border: 1px solid #a9c6e8;
  border-radius: 3px;
  background: linear-gradient(#dbe6f4 0, #d0dff0 20%, #c4d7ee 22%, #d4e4f5 70%, #e0eefa 100%);
  color: #15428b;
}
.g-reply { width: 144px; }
.g-actions { width: 203px; }
.g-junk { width: 135px; }
.g-opts { width: 134px; }
.g-find { width: 66px; }
.g-one { width: 65px; }
.grp-body { height: 74px; flex: none; display: flex; }
.g-reply .grp-body { padding-left: 1px; }
.g-actions .grp-body { padding-left: 3px; }
.g-opts .grp-body { padding-left: 0; }
.grp-body.col { flex-direction: column; padding: 2px 0 0 6px; }
.grp-label { position: relative; flex: 1; text-align: center; line-height: 15px; color: #3e6aaa; background: linear-gradient(#c5dbf2, #c2d9f0); border-radius: 0 0 2px 2px; }
.label-launch { padding-right: 16px; }
.g-one .grp-label { white-space: nowrap; font-family: "Open Sans", sans-serif; }
.launcher { position: absolute; right: 4px; top: 5px; width: 8px; height: 8px; border: 1px solid #7a95b8; background: #eef4fb; }

.rb { display: flex; flex-direction: column; align-items: center; height: 74px; padding-top: 4px; color: #15428b; text-align: center; line-height: 16.500px; font-size: 12px; font-family: inherit; }
.rb span { display: block; white-space: nowrap; margin-top: -1px; font-family: "Noto Sans CJK TC", "Open Sans", sans-serif; }
.ic { width: 30px; height: 30px; margin-bottom: 4.500px; flex: none; }
.w-38 { width: 38px; }
.w-40 { width: 40px; }
.w-42 { width: 42px; }
.w-44 { width: 44px; }
.w-51 { width: 51px; }
.w-52 { width: 52px; }
.w-fill { width: 100%; }
.ml-4 { margin-left: 4px; }
.rb-hot {
  width: 53px;
  height: 72px;
  margin-left: 2px;
  margin-top: 1px;
  padding-top: 2px;
  border: 1px solid #c8a050;
  border-radius: 2px;
  background: linear-gradient(#fcd9a8 0, #fbb870 38%, #f89a2e 40%, #fcc768 70%, #fee59c 100%);
  box-shadow: inset 0 0 2px #fff3c8;
  color: #1e2b4a;
}
.rb-hot span { letter-spacing: -.2px; }
.caret { width: 0; height: 0; margin-left: 3px; vertical-align: 2px; border-style: solid; border-width: 3px 3px 0; border-color: #44618e transparent transparent; }
.caret.alone { margin-left: 0; }
.rb-hot .caret { margin-top: 6px; }
.small-col { flex: 1; padding: 12px 0 0 3px; display: flex; flex-direction: column; gap: 11px; }
.small-col .sm { gap: 5px; }
.sm { height: 20px; display: flex; align-items: center; gap: 3px; color: #15428b; white-space: nowrap; }
.sm span { padding-bottom: 2px; }
.grp-body.col .sm { height: 23.500px; }
.sm .caret { margin-left: 4px; }
.sm-off { color: #9fb0c6; }

.msg-head { height: 91px; flex: none; padding-top: 12px; background: #dfebfd; color: #222; }
.hd-row { height: 12px; margin-top: 8px; display: flex; line-height: 12px; padding: 0 10px 0 7px; white-space: nowrap; }
.hd-row:first-child { margin-top: 0; }
.hd-label { width: 52px; flex: none; }
.hd-val { font-family: "Liberation Serif", "Noto Sans CJK TC", serif; font-size: 11.700px; color: #111; margin-top: -1px; }
.hd-name { font-family: "Noto Sans CJK TC", sans-serif; font-weight: 700; }
.hd-date-label { margin-left: auto; width: 64px; }
.hd-date { width: 162px; font-family: "Open Sans", "Noto Sans CJK TC", sans-serif; color: #222; text-align: right; white-space: nowrap; }
.msg-body {
  flex: 1;
  min-height: 0;
  margin: 0 8px 9px 7px;
  display: flex;
  border: 1px solid #6d8cb3;
  background: #fff;
}
.msg-text { flex: 1; padding: 15px 0 0 10px; font: 14.600px/20px "Lato", "Carlito", sans-serif; color: #222; }
.sb-split { width: 16px; background: #f3f3f3; margin-right: 0; }
.sb-splitter { height: 6px; flex: none; display: flex; align-items: center; justify-content: center; background: #a9c7f2; }
.sb-splitter i { width: 9px; height: 2px; background: #36507c; }
.sb-split .sb-btn { height: 18px; }
.sb-split .sb-thumb { width: 15px; }

/* dropdown */
.dropdown {
  position: absolute;
  left: 333px;
  top: 163px;
  width: 209px;
  height: 297px;
  padding: 1px;
  border: 1px solid #8a8a8a;
  border-radius: 3px;
  background: linear-gradient(90deg, #e9eef0 25px, #c5cdd2 25px, #c5cdd2 26px, #fafafa 26px);
  box-shadow: 3px 3px 4px rgba(0,0,0,.35);
  color: #1e395b;
}
.mi { height: 24px; display: flex; align-items: center; white-space: nowrap; }
.mi > span:last-of-type { padding-bottom: 5px; }
.mi > .mi-ic:last-of-type { padding-bottom: 0; }
.mi.off { color: #a0a8b4; }
.mi.hot { border: 1px solid #dbbf6f; border-radius: 3px; background: linear-gradient(#fff9dc 0, #ffeca8 42%, #ffd25e 45%, #ffe9a0 100%); margin: 0; }
.mi-ic { width: 25px; height: 24px; margin-right: 8px; flex: none; display: flex; align-items: center; justify-content: center; }
.mi.hot .mi-ic { margin-left: -1px; }
.mi-checked { width: 21px; height: 21px; margin: 0 10px 0 2px; background: #fde9b0; border: 1px solid #e2a24a; border-radius: 2px; }
.mi-sep { height: 2px; margin-left: 34px; border-top: 1px solid #c5c5c5; }

/* floating round buttons */
.office-btn { position: absolute; left: 37px; top: 38px; width: 37px; height: 37px; }
.orb { position: absolute; left: 8px; top: 0; width: 38px; height: 38px; }
```
